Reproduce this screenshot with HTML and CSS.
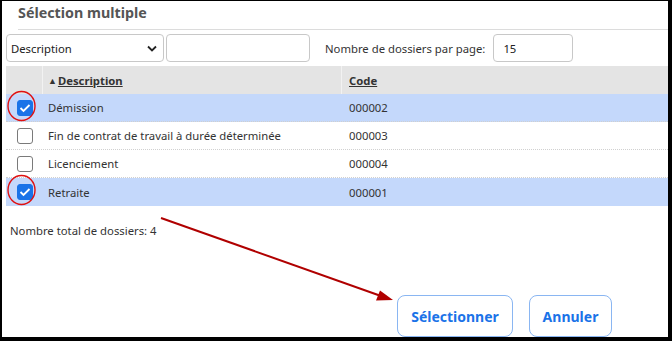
FILE: index.html
```html
<!DOCTYPE html>
<html lang="fr">
<head>
<meta charset="utf-8">
<title>Sélection multiple</title>
<link rel="stylesheet" href="styles.css">
</head>
<body>
<div class="frame">
  <div class="title">Sélection multiple</div>
  <div class="rule"></div>
  <div class="toolbar">
    <div class="select"><span>Description</span>
      <svg class="chev" width="10" height="7" viewBox="0 0 10 7"><path d="M1 1.5 L5 5.5 L9 1.5" fill="none" stroke="#222" stroke-width="1.8"/></svg>
    </div>
    <div class="input search"></div>
    <div class="label">Nombre de dossiers par page:</div>
    <div class="input perpage">15</div>
  </div>
  <div class="table">
    <div class="row head">
      <div class="c-check"></div>
      <div class="c-desc"><span class="sort">▲</span><span class="hl">Description</span></div>
      <div class="c-code"><span class="hl">Code</span></div>
    </div>
    <div class="row sel">
      <div class="c-check"><span class="box on"><svg width="12" height="10" viewBox="0 0 12 10"><path d="M1.5 5 L4.5 8 L10.5 2" fill="none" stroke="#fff" stroke-width="1.8"/></svg></span></div>
      <div class="c-desc">Démission</div>
      <div class="c-code">000002</div>
    </div>
    <div class="row">
      <div class="c-check"><span class="box"></span></div>
      <div class="c-desc">Fin de contrat de travail à durée déterminée</div>
      <div class="c-code">000003</div>
    </div>
    <div class="row">
      <div class="c-check"><span class="box"></span></div>
      <div class="c-desc">Licenciement</div>
      <div class="c-code">000004</div>
    </div>
    <div class="row sel last">
      <div class="c-check"><span class="box on"><svg width="12" height="10" viewBox="0 0 12 10"><path d="M1.5 5 L4.5 8 L10.5 2" fill="none" stroke="#fff" stroke-width="1.8"/></svg></span></div>
      <div class="c-desc">Retraite</div>
      <div class="c-code">000001</div>
    </div>
  </div>
  <div class="total">Nombre total de dossiers: 4</div>
  <div class="actions">
    <button class="btn">Sélectionner</button>
    <button class="btn">Annuler</button>
  </div>
  <svg class="annot" width="672" height="341" viewBox="0 0 672 341">
    <ellipse cx="21.5" cy="106" rx="13.5" ry="14.5" fill="none" stroke="#e01010" stroke-width="1.4"/>
    <ellipse cx="21.5" cy="190" rx="13.5" ry="14.5" fill="none" stroke="#e01010" stroke-width="1.4"/>
    <line x1="161" y1="218" x2="381" y2="296" stroke="#b00000" stroke-width="2"/>
    <polygon points="393,300 376,300.5 380,290.5" fill="#b00000"/>
  </svg>
</div>
</body>
</html>
```
FILE: styles.css
```css
* { box-sizing: border-box; }
html, body { margin: 0; padding: 0; background: #fff; }
body { font-family: "Noto Sans", "Open Sans", sans-serif; color: #333; font-size: 11.3px; }
.frame {
  position: relative;
  width: 672px; height: 341px;
  border-style: solid; border-color: #000;
  border-width: 1px 4px 4px 2px;
  background: #fff;
  display: flex; flex-direction: column;
}
.title {
  margin: 2px 0 0 16px;
  font-size: 14.3px; font-weight: 700; color: #555;
  line-height: 20px;
}
.rule { margin: 6px 0 0 16px; border-top: 1px solid #dcdcdc; }
.toolbar {
  display: flex; align-items: center;
  margin: 4px 0 0 4px; height: 28px;
}
.select, .input {
  height: 28px; border: 1px solid #c8c8c8; border-radius: 4px;
  display: flex; align-items: center; padding: 0 4px;
  font-size: 11.3px; color: #222;
}
.select { width: 158px; justify-content: space-between; padding-right: 6px; }
.search { width: 144px; margin-left: 2px; }
.label { margin-left: 15px; color: #333; }
.perpage { width: 80px; margin-left: 8px; padding-left: 9px; }
.table { margin: 4px 0 0 4px; }
.row { display: flex; height: 28px; align-items: center; border-bottom: 1px dotted #d0d0d0; }
.row.last { border-bottom: none; }
.row.head { background: #e4e4e4; border-bottom: none; font-weight: 700; color: #333; }
.row.sel { background: #c4d8fb; }
.c-check { width: 37px; height: 100%; display: flex; align-items: center; justify-content: center; }
.c-desc { width: 299px; height: 100%; display: flex; align-items: center; padding-left: 5px; }
.c-code { flex: 1; height: 100%; display: flex; align-items: center; padding-left: 7px; }
.head .c-check, .head .c-desc { border-right: 1px solid #f2f2f2; }
.sort { font-size: 9px; margin-right: 1px; }
.hl { text-decoration: underline; }
.box {
  width: 16px; height: 16px; border: 1.5px solid #7a7a7a; border-radius: 3px; background: #fff;
  display: flex; align-items: center; justify-content: center;
}
.box.on { background: #1a73e8; border-color: #1a73e8; }
.total { margin: 17px 0 0 8px; }
.actions { margin-top: auto; margin-bottom: 0; display: flex; justify-content: flex-end; gap: 16px; padding-right: 56px; }
.btn {
  font-family: "Noto Sans", "Open Sans", sans-serif;
  height: 42px; border: 1.5px solid #8ab6f2; border-radius: 8px; background: #fff;
  color: #1a73e8; font-weight: 700; font-size: 14px; padding: 0 10px;
}
.btn:first-child { width: 116px; }
.btn:last-child { width: 83px; }
.annot { position: absolute; left: -2px; top: -1px; pointer-events: none; }
```
